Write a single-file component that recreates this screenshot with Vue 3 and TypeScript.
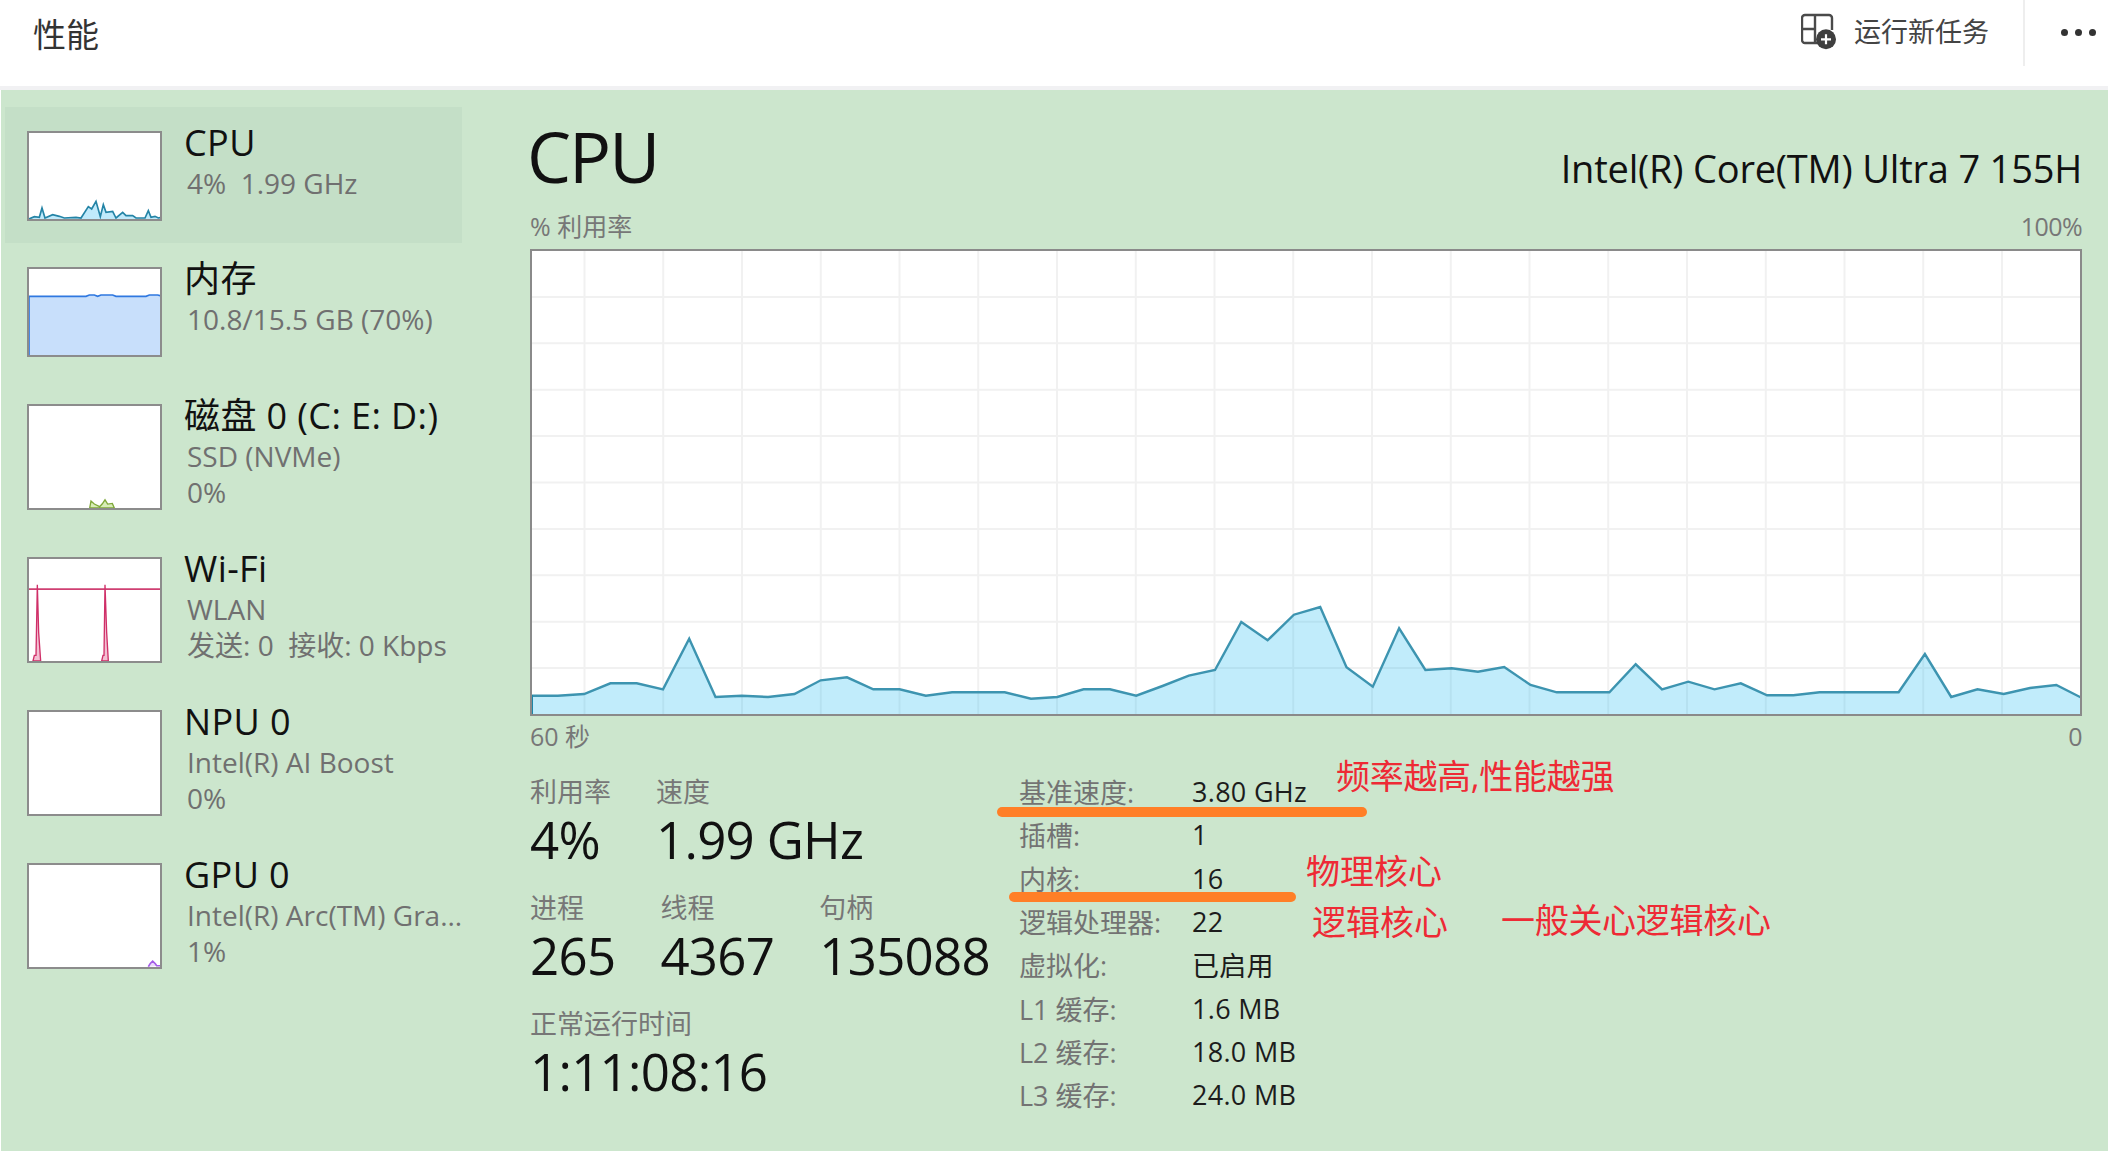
<script setup lang="ts">
const ys = [407,407,402,370,370,388,236,411,407,411,402,361,352,388,388,407,397,397,397,416,411,388,388,407,378,347,330,186,241,164,141,322,380,205,330,325,335,321,375,397,397,397,313,388,365,388,370,406,406,397,397,397,397,282,411,388,402,384,375,415]
const pts = ys.map((z, i) => `${(531.5 + i * 26.29).toFixed(1)},${(560 + z / 3).toFixed(1)}`).join(' ')
const area = `531.5,715 ${pts} 2082,715`
const hLines = Array.from({ length: 9 }, (_, i) => 714.5 - 46.4 * (i + 1))
const vLines = Array.from({ length: 19 }, (_, i) => 584.5 + 78.75 * i)

const cpuLine = '84,655 100,648 115,650 123,622 132,652 155,642 175,647 190,652 225,650 240,652 262,618 272,625 285,602 298,648 307,612 315,635 335,632 345,652 365,635 375,645 395,645 405,652 432,652 442,630 450,650 462,647 472,652 483,650'
const memLine = '84,889 255,889 265,885 280,885 290,889 300,885 335,885 345,889 435,889 445,885 470,885 484,889'
const diskLine = '266,1528 270,1507 280,1516 296,1524 304,1515 312,1503 320,1516 334,1514 340,1528'
const wifiA = '96,457 100,440 105,440 109,224 113,370 119,457'
const wifiB = '302,457 306,440 309,440 312,224 317,370 322,457'
const gpuLine = '442,1375 448,1365 455,1358 463,1366 467,1372 472,1372 480,1372'

const stats1 = [{ l: '利用率', v: '4%' }, { l: '速度', v: '1.99 GHz' }]
const stats2 = [{ l: '进程', v: '265' }, { l: '线程', v: '4367' }, { l: '句柄', v: '135088' }]
const info = [
  ['基准速度:', '3.80 GHz'], ['插槽:', '1'], ['内核:', '16'], ['逻辑处理器:', '22'],
  ['虚拟化:', '已启用'], ['L1 缓存:', '1.6 MB'], ['L2 缓存:', '18.0 MB'], ['L3 缓存:', '24.0 MB'],
]
</script>

<template>
  <div class="app">
    <header class="top">
      <div class="page-title">性能</div>
      <div class="actions">
        <button class="run">
          <svg class="run-icon" viewBox="0 0 40 40" width="40" height="40">
            <path d="M21 33H4a3 3 0 0 1-3-3V8a3 3 0 0 1 3-3h24a3 3 0 0 1 3 3v12M14 5v28M1 19h13" fill="none" stroke="#4a4a4a" stroke-width="2.400" />
            <circle cx="25" cy="29.300" r="10" fill="#3f3f3f" />
            <path d="M20 29.300h10M25 24.300v10" stroke="#fff" stroke-width="2.200" />
          </svg>
          <span>运行新任务</span>
        </button>
        <div class="sep"></div>
        <div class="more"><i></i><i></i><i></i></div>
      </div>
    </header>

    <div class="body">
      <aside class="side">
        <div class="item active">
          <div class="thumb short">
            <svg viewBox="84 397 393 258" preserveAspectRatio="none">
              <polygon :points="cpuLine + ' 483,658 84,658'" fill="#c0eafb" />
              <polyline :points="cpuLine" fill="none" stroke="#2484a6" stroke-width="5" />
            </svg>
          </div>
          <div class="meta">
            <div class="name">CPU</div>
            <div class="sub">4%&nbsp;&nbsp;1.99 GHz</div>
          </div>
        </div>
        <div class="item">
          <div class="thumb short">
            <svg viewBox="84 807 393 258" preserveAspectRatio="none">
              <polygon :points="memLine + ' 484,1070 84,1070'" fill="#c8dffb" />
              <polyline :points="memLine" fill="none" stroke="#2f78e0" stroke-width="5" />
              <line x1="84" y1="889" x2="84" y2="1070" stroke="#2f78e0" stroke-width="5" />
            </svg>
          </div>
          <div class="meta">
            <div class="name">内存</div>
            <div class="sub">10.8/15.5 GB (70%)</div>
          </div>
        </div>
        <div class="item">
          <div class="thumb">
            <svg viewBox="84 1216 393 312" preserveAspectRatio="none">
              <polygon :points="diskLine" fill="#d8edb8" stroke="#7fa83a" stroke-width="4" />
            </svg>
          </div>
          <div class="meta">
            <div class="name">磁盘 0 (C: E: D:)</div>
            <div class="sub">SSD (NVMe)</div>
            <div class="sub">0%</div>
          </div>
        </div>
        <div class="item">
          <div class="thumb">
            <svg viewBox="84 145 393 312" preserveAspectRatio="none">
              <line x1="84" y1="237" x2="484" y2="237" stroke="#cf3f72" stroke-width="5" />
              <polygon :points="wifiA" fill="#f3bfd2" stroke="#cf2f68" stroke-width="4" />
              <polygon :points="wifiB" fill="#f3bfd2" stroke="#cf2f68" stroke-width="4" />
            </svg>
          </div>
          <div class="meta">
            <div class="name">Wi-Fi</div>
            <div class="sub">WLAN</div>
            <div class="sub">发送: 0&nbsp;&nbsp;接收: 0 Kbps</div>
          </div>
        </div>
        <div class="item">
          <div class="thumb"></div>
          <div class="meta">
            <div class="name">NPU 0</div>
            <div class="sub">Intel(R) AI Boost</div>
            <div class="sub">0%</div>
          </div>
        </div>
        <div class="item">
          <div class="thumb">
            <svg viewBox="84 1064 393 312" preserveAspectRatio="none">
              <polyline :points="gpuLine" fill="#ead9fb" stroke="#a45be8" stroke-width="5" />
            </svg>
          </div>
          <div class="meta">
            <div class="name">GPU 0</div>
            <div class="sub">Intel(R) Arc(TM) Gra...</div>
            <div class="sub">1%</div>
          </div>
        </div>
      </aside>

      <main class="main">
        <div class="head">
          <h1>CPU</h1>
          <div class="model">Intel(R) Core(TM) Ultra 7 155H</div>
        </div>
        <div class="axis top-axis"><span>% 利用率</span><span>100%</span></div>
        <div class="graph">
          <svg viewBox="532 251 1548 463" preserveAspectRatio="none">
            <line v-for="y in hLines" :key="y" x1="532" x2="2080" :y1="y" :y2="y" stroke="#f1f1f1" stroke-width="2" />
            <line v-for="x in vLines" :key="x" :x1="x" :x2="x" y1="251" y2="714" stroke="#f1f1f1" stroke-width="2" />
            <polygon :points="area" fill="#11b4ef" fill-opacity="0.26" />
            <polyline :points="pts" fill="none" stroke="#3d94b0" stroke-width="2.400" />
            <line x1="532" y1="695" x2="532" y2="714" stroke="#1c86a8" stroke-width="2" />
          </svg>
        </div>
        <div class="axis bottom-axis"><span>60 秒</span><span>0</span></div>

        <div class="details">
          <div class="stats">
            <div class="stat-row">
              <div v-for="s in stats1" :key="s.l" class="stat">
                <div class="stat-label">{{ s.l }}</div>
                <div class="stat-value">{{ s.v }}</div>
              </div>
            </div>
            <div class="stat-row">
              <div v-for="s in stats2" :key="s.l" class="stat">
                <div class="stat-label">{{ s.l }}</div>
                <div class="stat-value">{{ s.v }}</div>
              </div>
            </div>
            <div class="stat-row">
              <div class="stat">
                <div class="stat-label">正常运行时间</div>
                <div class="stat-value">1:11:08:16</div>
              </div>
            </div>
          </div>
          <div class="info">
            <template v-for="r in info" :key="r[0]">
              <div class="info-label">{{ r[0] }}</div>
              <div class="info-value">{{ r[1] }}</div>
            </template>
          </div>
        </div>
      </main>
    </div>

    <div class="mark mark-a"></div>
    <div class="mark mark-b"></div>
    <div class="note note-a">频率越高,性能越强</div>
    <div class="note note-b">物理核心</div>
    <div class="note note-c">逻辑核心</div>
    <div class="note note-d">一般关心逻辑核心</div>
  </div>
</template>

<style scoped>
.app {
  position: relative;
  width: 2108px;
  height: 1151px;
  display: flex;
  flex-direction: column;
  overflow: hidden;
  background: #fff;
  font-family: "Open Sans", "Noto Sans CJK SC", sans-serif;
  color: #111;
}
.top {
  height: 86px;
  flex: none;
  display: flex;
  justify-content: space-between;
  align-items: flex-start;
  padding-left: 33px;
  border-bottom: 4px solid #f1f1f3;
}
.page-title {
  font-size: 33px;
  line-height: 70px;
  color: #333;
}
.actions {
  display: flex;
  align-items: flex-start;
}
.run {
  display: flex;
  align-items: center;
  gap: 13px;
  height: 64px;
  padding: 0 34px 0 0;
  border: 0;
  background: none;
  font: inherit;
  font-size: 27px;
  color: #444;
}
.run span { line-height: 64px; }
.run-icon { display: block; margin-top: -4px; }
.sep {
  width: 2px;
  height: 66px;
  background: #eeeeee;
}
.more {
  display: flex;
  gap: 7px;
  padding: 29px 12px 0 36px;
}
.more i {
  width: 7px;
  height: 7px;
  border-radius: 50%;
  background: #333;
}
.body {
  flex: 1;
  display: flex;
  margin-left: 1px;
  background: #cce6cd;
}
.side {
  width: 529px;
  flex: none;
  padding: 17px 0 0 4px;
  box-sizing: border-box;
}
.item {
  width: 457px;
  display: flex;
  gap: 22px;
  padding: 24px 0 23px 22px;
  box-sizing: border-box;
}
.item.active {
  background: #c4dfc7;
  padding-bottom: 22px;
}
.thumb {
  width: 135px;
  height: 106px;
  flex: none;
  border: 2px solid #8c8c8c;
  box-sizing: border-box;
  background: #fff;
}
.thumb.short { height: 90px; }
.thumb svg {
  display: block;
  width: 100%;
  height: 100%;
}
.meta {
  margin: -10px 0 -9px;
  min-width: 0;
  white-space: nowrap;
}
.name {
  font-size: 36px;
  line-height: 44px;
  color: #111;
  letter-spacing: 0.4px;
  height: 44px;
}
.sub {
  font-size: 28px;
  line-height: 36px;
  color: #707070;
  padding-left: 3px;
}
.main {
  flex: 1;
  min-width: 0;
  padding-right: 26px;
}
.head {
  height: 120px;
  display: flex;
  justify-content: space-between;
  align-items: baseline;
  padding-top: 11px;
  box-sizing: border-box;
}
h1 {
  margin: 0 0 0 -3px;
  font-size: 70px;
  font-weight: 400;
  line-height: 110px;
  letter-spacing: -2px;
  color: #111;
}
.model {
  font-size: 38px;
  color: #111;
  letter-spacing: -0.2px;
}
.axis {
  display: flex;
  justify-content: space-between;
  font-size: 25px;
  color: #777;
}
.axis span:last-child { letter-spacing: -0.6px; }
.top-axis {
  height: 39px;
  line-height: 32px;
}
.bottom-axis {
  height: 40px;
  line-height: 40px;
}
.graph {
  height: 467px;
  border: 2px solid #8a8a8a;
  box-sizing: border-box;
  background: #fff;
}
.graph svg {
  display: block;
  width: 100%;
  height: 100%;
}
.details {
  display: flex;
  margin-top: 14px;
}
.stats {
  width: 489px;
  padding-top: 6px;
  box-sizing: border-box;
  display: flex;
  flex-direction: column;
  gap: 22px;
}
.stat-row {
  display: flex;
  gap: 45px;
}
.stat-label {
  font-size: 27px;
  line-height: 32px;
  color: #777;
}
.stat-value {
  font-size: 51px;
  line-height: 62px;
  color: #111;
  letter-spacing: -0.7px;
}
.info {
  display: grid;
  grid-template-columns: 173px auto;
  grid-auto-rows: 43.330px;
  align-items: center;
  align-content: start;
  font-size: 27px;
}
.info-label { color: #737373; }
.info-value { color: #1c1c1c; letter-spacing: 0.3px; }
.mark {
  position: absolute;
  height: 10px;
  border-radius: 5px;
  background: #ff7f27;
}
.mark-a { left: 997px; width: 370px; top: 807px; }
.mark-b { left: 1009px; width: 287px; top: 892px; }
.note {
  position: absolute;
  font-size: 34px;
  line-height: 44px;
  color: #ee2a35;
  white-space: nowrap;
}
.note-a { left: 1336px; top: 754px; letter-spacing: -0.3px; }
.note-b { left: 1306px; top: 849px; }
.note-c { left: 1312px; top: 900px; }
.note-d { left: 1501px; top: 898px; letter-spacing: -0.300px; }
</style>
